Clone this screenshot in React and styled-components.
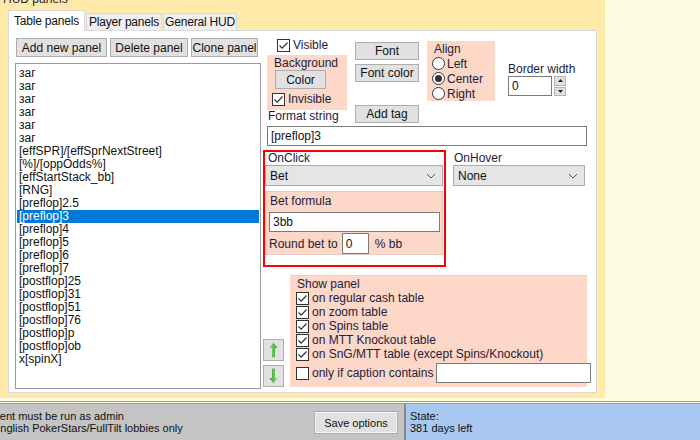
import React from 'react';
import styled, { createGlobalStyle } from 'styled-components';

const GlobalStyle = createGlobalStyle`
  html, body { margin: 0; padding: 0; }
  body {
    font-family: "Liberation Sans", Arial, sans-serif;
    font-size: 12px;
    color: #000;
  }
  * { box-sizing: border-box; }
`;

const panels = [
  'заг', 'заг', 'заг', 'заг', 'заг', 'заг',
  '[effSPR]/[effSprNextStreet]',
  '[%]/[oppOdds%]',
  '[effStartStack_bb]',
  '[RNG]',
  '[preflop]2.5',
  '[preflop]3',
  '[preflop]4',
  '[preflop]5',
  '[preflop]6',
  '[preflop]7',
  '[postflop]25',
  '[postflop]31',
  '[postflop]51',
  '[postflop]76',
  '[postflop]p',
  '[postflop]ob',
  'x[spinX]',
];

const showOptions = [
  'on regular cash table',
  'on zoom table',
  'on Spins table',
  'on MTT Knockout table',
  'on SnG/MTT table (except Spins/Knockout)',
];

function CheckBox({ checked }) {
  return (
    <Box>
      {checked && (
        <svg width="11" height="11" viewBox="0 0 11 11">
          <path d="M1.5 5.5 L4.2 8.2 L9.5 2.5" fill="none" stroke="#333" strokeWidth="1.2" />
        </svg>
      )}
    </Box>
  );
}

function Radio({ checked }) {
  return <RadioCircle>{checked && <RadioDot />}</RadioCircle>;
}

function Chevron() {
  return (
    <svg width="10" height="6" viewBox="0 0 10 6">
      <path d="M1 1 L5 5 L9 1" fill="none" stroke="#555" strokeWidth="1" />
    </svg>
  );
}

function GreenArrow({ down }) {
  return (
    <svg width="9" height="16" viewBox="0 0 9 16" style={{ transform: down ? 'rotate(180deg)' : 'none' }}>
      <defs>
        <linearGradient id={down ? 'gd' : 'gu'} x1="0" x2="1" y1="0" y2="0">
          <stop offset="0" stopColor="#8fdc7e" />
          <stop offset="1" stopColor="#2f9d2f" />
        </linearGradient>
      </defs>
      <polygon points="4.5,0.5 8.5,6 6,6 6,15.5 3,15.5 3,6 0.5,6" fill={`url(#${down ? 'gd' : 'gu'})`} />
    </svg>
  );
}

export default function App() {
  return (
    <>
      <GlobalStyle />
      <Screen>
        <Main>
          <HudGroup>
            <GroupTitle>HUD panels</GroupTitle>
            <Tabs>
              <Tab $active $w={77}>Table panels</Tab>
              <Tab $w={76}>Player panels</Tab>
              <Tab $w={74}>General HUD</Tab>
            </Tabs>
            <TabContent>
              <LeftCol>
                <ButtonRow>
                  <Button $w={91}>Add new panel</Button>
                  <Button $w={78}>Delete panel</Button>
                  <Button $w={67}>Clone panel</Button>
                </ButtonRow>
                <ListBox>
                  {panels.map((p, i) => (
                    <ListItem key={i} $selected={i === 11}>{p}</ListItem>
                  ))}
                </ListBox>
              </LeftCol>

              <RightCol>
                <TopRow>
                  <Col1>
                    <CheckRow $ml={10}>
                      <CheckBox checked />
                      <span>Visible</span>
                    </CheckRow>
                    <BgGroup>
                      <GroupLabel>Background</GroupLabel>
                      <Button $w={51} $h={19} $ml={1}>Color</Button>
                      <CheckRow $ml={-2} $mt={3}>
                        <CheckBox checked />
                        <span>Invisible</span>
                      </CheckRow>
                    </BgGroup>
                    <Label $ml={1}>Format string</Label>
                  </Col1>
                  <Col2>
                    <Button $w={64} $h={18} $mt={4}>Font</Button>
                    <Button $w={64} $h={18} $mt={4}>Font color</Button>
                    <Button $w={64} $h={18} $mt={23}>Add tag</Button>
                  </Col2>
                  <Col3>
                    <AlignGroup>
                      <GroupLabel $ml={2}>Align</GroupLabel>
                      <RadioRow><Radio /><span>Left</span></RadioRow>
                      <RadioRow><Radio checked /><span>Center</span></RadioRow>
                      <RadioRow><Radio /><span>Right</span></RadioRow>
                    </AlignGroup>
                  </Col3>
                  <Col4>
                    <Label>Border width</Label>
                    <SpinRow>
                      <TextInput $w={44} $h={20} readOnly value="0" />
                      <SpinButtons>
                        <SpinHalf>
                          <svg width="5" height="3" viewBox="0 0 5 3"><polygon points="2.5,0 5,3 0,3" fill="#222" /></svg>
                        </SpinHalf>
                        <SpinHalf>
                          <svg width="5" height="3" viewBox="0 0 5 3"><polygon points="0,0 5,0 2.5,3" fill="#222" /></svg>
                        </SpinHalf>
                      </SpinButtons>
                    </SpinRow>
                  </Col4>
                </TopRow>

                <TextInput $w={320} $h={20} $ml={4} $mt={3} readOnly value="[preflop]3" />

                <ActionRow>
                  <Highlight>
                    <Label $ml={3}>OnClick</Label>
                    <Select $w={178}>
                      <span>Bet</span>
                      <Chevron />
                    </Select>
                    <BetGroup>
                      <GroupLabel $ml={1}>Bet formula</GroupLabel>
                      <TextInput $w={171} $h={20} $mt={4} readOnly value="3bb" />
                      <RoundRow>
                        <span>Round bet to</span>
                        <TextInput $w={27} $h={21} readOnly value="0" />
                        <span>% bb</span>
                      </RoundRow>
                    </BetGroup>
                  </Highlight>
                  <HoverCol>
                    <Label $ml={1}>OnHover</Label>
                    <Select $w={132}>
                      <span>None</span>
                      <Chevron />
                    </Select>
                  </HoverCol>
                </ActionRow>

                <BottomRow>
                  <ArrowCol>
                    <ArrowButton><GreenArrow /></ArrowButton>
                    <ArrowButton><GreenArrow down /></ArrowButton>
                  </ArrowCol>
                  <ShowGroup>
                    <GroupLabel>Show panel</GroupLabel>
                    {showOptions.map((o) => (
                      <CheckRow key={o} $ml={-1} $h={14}>
                        <CheckBox checked />
                        <span>{o}</span>
                      </CheckRow>
                    ))}
                    <CaptionRow>
                      <CheckBox />
                      <span>only if caption contains</span>
                      <CaptionInput readOnly value="" />
                    </CaptionRow>
                  </ShowGroup>
                </BottomRow>
              </RightCol>
            </TabContent>
          </HudGroup>
        </Main>

        <StatusBar>
          <StatusLeft>
            <StatusText $ml={-13}>
              <div>Client must be run as admin</div>
              <div style={{ marginLeft: 6 }}>English PokerStars/FullTilt lobbies only</div>
            </StatusText>
            <SaveButton>Save options</SaveButton>
          </StatusLeft>
          <StatusRight>
            <StatusText>
              <div>State:</div>
              <div>381 days left</div>
            </StatusText>
          </StatusRight>
        </StatusBar>
      </Screen>
    </>
  );
}

const Screen = styled.div`
  width: 700px;
  height: 440px;
  display: flex;
  flex-direction: column;
  overflow: hidden;
  background: #fffde1;
`;

const Main = styled.div`
  height: 401px;
  display: flex;
  align-items: flex-start;
`;

const HudGroup = styled.div`
  width: 605px;
  height: 398px;
  background: #ffeaa9;
  padding: 0 8px 5px 8px;
  display: flex;
  flex-direction: column;
`;

const GroupTitle = styled.div`
  margin: -7px 0 0 -5px;
  height: 13px;
  line-height: 13px;
  color: #1c1c3c;
`;

const Tabs = styled.div`
  margin-top: 4px;
  height: 20px;
  display: flex;
  align-items: flex-end;
  position: relative;
  z-index: 1;
`;

const Tab = styled.div`
  width: ${(p) => p.$w}px;
  height: ${(p) => (p.$active ? 21 : 17)}px;
  margin-bottom: ${(p) => (p.$active ? -1 : 0)}px;
  margin-left: ${(p) => (p.$active ? 0 : 1)}px;
  background: ${(p) => (p.$active ? '#fff' : '#f0f0f0')};
  border: 1px solid #d9d9d9;
  border-bottom: none;
  display: flex;
  align-items: center;
  justify-content: center;
  white-space: nowrap;
  letter-spacing: -0.2px;
  color: #111;
`;

const TabContent = styled.div`
  flex: 1;
  background: #fff;
  border: 1px solid #d9d9d9;
  padding: 7px 6px 3px 6px;
  display: flex;
  gap: 2px;
`;

const LeftCol = styled.div`
  width: 246px;
  display: flex;
  flex-direction: column;
`;

const ButtonRow = styled.div`
  display: flex;
  gap: 3px;
  margin-left: 1px;
`;

const Button = styled.div`
  width: ${(p) => p.$w}px;
  height: ${(p) => p.$h || 19}px;
  margin-top: ${(p) => p.$mt || 0}px;
  margin-left: ${(p) => p.$ml || 0}px;
  background: #e1e1e1;
  border: 1px solid #adadad;
  display: flex;
  align-items: center;
  justify-content: center;
  white-space: nowrap;
  color: #111;
  flex-shrink: 0;
`;

const ListBox = styled.div`
  flex: 1;
  margin-top: 6px;
  border: 1px solid #9a9a9a;
  padding: 3px 1px;
  overflow: hidden;
`;

const ListItem = styled.div`
  height: 13px;
  line-height: 13px;
  padding-left: 2px;
  white-space: nowrap;
  background: ${(p) => (p.$selected ? '#0078d7' : 'transparent')};
  color: ${(p) => (p.$selected ? '#fff' : '#111')};
`;

const RightCol = styled.div`
  flex: 1;
  display: flex;
  flex-direction: column;
`;

const TopRow = styled.div`
  display: flex;
  align-items: flex-start;
`;

const Col1 = styled.div`
  width: 80px;
  margin-left: 4px;
  display: flex;
  flex-direction: column;
`;

const Col2 = styled.div`
  margin-left: 8px;
  display: flex;
  flex-direction: column;
`;

const Col3 = styled.div`
  margin-left: 8px;
  padding-top: 3px;
`;

const Col4 = styled.div`
  margin-left: 13px;
  padding-top: 25px;
`;

const Label = styled.div`
  height: 13px;
  line-height: 13px;
  margin-left: ${(p) => p.$ml || 0}px;
  color: #1c1c3c;
  white-space: nowrap;
`;

const GroupLabel = styled(Label)``;

const CheckRow = styled.div`
  display: flex;
  align-items: center;
  gap: 3px;
  height: ${(p) => p.$h || 14}px;
  margin-left: ${(p) => p.$ml || 0}px;
  margin-top: ${(p) => p.$mt || 0}px;
  color: #1c1c3c;
  white-space: nowrap;
`;

const Box = styled.div`
  width: 13px;
  height: 13px;
  border: 1px solid #333;
  background: #fff;
  display: flex;
  align-items: center;
  justify-content: center;
  flex-shrink: 0;
`;

const BgGroup = styled.div`
  margin-top: 3px;
  height: 55px;
  background: #fdd7c7;
  padding: 2px 0 0 7px;
`;

const AlignGroup = styled.div`
  width: 68px;
  height: 60px;
  background: #fdd7c7;
  padding: 2px 0 0 5px;
`;

const RadioRow = styled.div`
  display: flex;
  align-items: center;
  gap: 2px;
  height: 15px;
  color: #1c1c3c;
`;

const RadioCircle = styled.div`
  width: 13px;
  height: 13px;
  border-radius: 50%;
  border: 1px solid #333;
  background: #fff;
  display: flex;
  align-items: center;
  justify-content: center;
`;

const RadioDot = styled.div`
  width: 7px;
  height: 7px;
  border-radius: 50%;
  background: #333;
`;

const SpinRow = styled.div`
  display: flex;
  gap: 2px;
`;

const SpinButtons = styled.div`
  width: 12px;
  height: 20px;
  display: flex;
  flex-direction: column;
  gap: 1px;
`;

const SpinHalf = styled.div`
  flex: 1;
  background: #e1e1e1;
  border: 1px solid #b5b5b5;
  display: flex;
  align-items: center;
  justify-content: center;
`;

const TextInput = styled.input`
  width: ${(p) => p.$w}px;
  height: ${(p) => p.$h}px;
  margin: ${(p) => p.$mt || 0}px 0 0 ${(p) => p.$ml || 0}px;
  border: 1px solid #7a7a7a;
  padding: 0 3px;
  font-family: "Liberation Sans", Arial, sans-serif;
  font-size: 12px;
  color: #111;
  background: #fff;
  outline: none;
  flex-shrink: 0;
`;

const CaptionInput = styled(TextInput)`
  width: 155px;
  height: 20px;
  margin-left: auto;
`;

const ActionRow = styled.div`
  display: flex;
  margin-top: 4px;
`;

const Highlight = styled.div`
  width: 183px;
  height: 117px;
  border: 2px solid #ff0000;
  padding: 0 1px 0 0;
  display: flex;
  flex-direction: column;
`;

const Select = styled.div`
  width: ${(p) => p.$w}px;
  height: 21px;
  background: #e5e5e5;
  border: 1px solid #acacac;
  display: flex;
  align-items: center;
  justify-content: space-between;
  padding: 0 6px 0 4px;
  color: #111;
`;

const BetGroup = styled.div`
  margin-top: 5px;
  width: 178px;
  height: 64px;
  background: #fdd7c7;
  border: 1px solid #e2cbc3;
  padding: 3px 0 0 3px;
`;

const RoundRow = styled.div`
  display: flex;
  align-items: center;
  gap: 4px;
  margin-top: 1px;
  color: #1c1c3c;
  & > span:last-child {
    margin-left: 2px;
  }
`;

const HoverCol = styled.div`
  margin-left: 7px;
  padding-top: 2px;
  display: flex;
  flex-direction: column;
`;

const BottomRow = styled.div`
  display: flex;
  margin-top: 8px;
`;

const ArrowCol = styled.div`
  display: flex;
  flex-direction: column;
  justify-content: flex-end;
  gap: 4px;
`;

const ArrowButton = styled.div`
  width: 21px;
  height: 22px;
  background: #e1e1e1;
  border: 1px solid #adadad;
  display: flex;
  align-items: center;
  justify-content: center;
`;

const ShowGroup = styled.div`
  margin-left: 6px;
  width: 297px;
  height: 112px;
  background: #fdd7c7;
  border-top: 1px solid #e6cfc7;
  padding: 2px 1px 0 7px;
`;

const CaptionRow = styled.div`
  display: flex;
  align-items: center;
  gap: 3px;
  margin: 2px 0 0 -1px;
  color: #1c1c3c;
  white-space: nowrap;
`;

const StatusBar = styled.div`
  flex: 1;
  display: flex;
  border-top: 3px double #9a9a9a;
  font-size: 11px;
`;

const StatusLeft = styled.div`
  width: 404px;
  background: #c4c4c4;
  display: flex;
  align-items: flex-start;
  overflow: hidden;
`;

const StatusRight = styled.div`
  flex: 1;
  background: #a8c8ef;
  border-left: 2px solid #8a8a8a;
  padding-left: 4px;
`;

const StatusText = styled.div`
  margin-left: ${(p) => p.$ml || 0}px;
  padding-top: 6px;
  line-height: 12px;
  color: #111;
  white-space: nowrap;
`;

const SaveButton = styled.div`
  margin: 7px 6px 0 auto;
  width: 84px;
  height: 23px;
  background: #e1e1e1;
  border: 1px solid #adadad;
  box-shadow: inset 0 0 0 1px #f4f4f4;
  display: flex;
  align-items: center;
  justify-content: center;
  color: #111;
  flex-shrink: 0;
`;
